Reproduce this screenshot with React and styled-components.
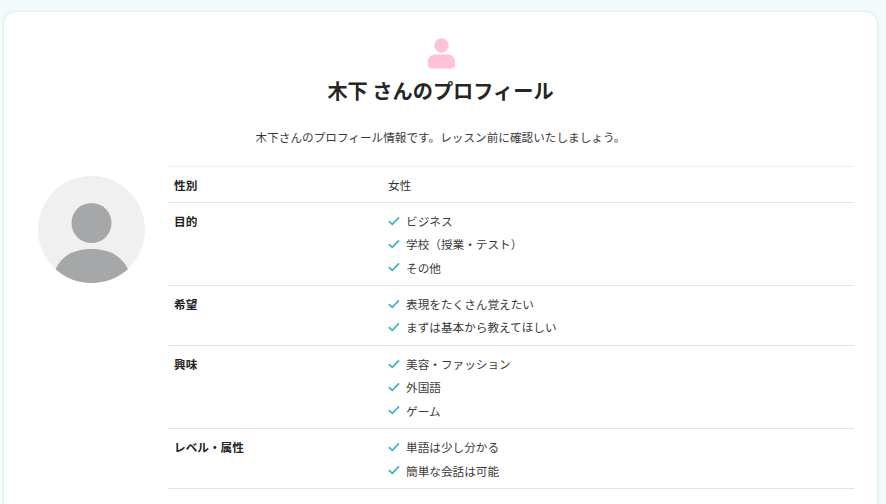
import React from 'react';
import styled, { createGlobalStyle } from 'styled-components';

const GlobalStyle = createGlobalStyle`
    html, body {
        margin: 0;
        height: 504px;
        overflow: hidden;
        background: #f3fafc;
        font-family: "Noto Sans CJK JP", "Noto Sans", sans-serif;
    }
`;

const rows = [
    { label: '性別', value: '女性' },
    { label: '目的', items: ['ビジネス', '学校（授業・テスト）', 'その他'] },
    { label: '希望', items: ['表現をたくさん覚えたい', 'まずは基本から教えてほしい'] },
    { label: '興味', items: ['美容・ファッション', '外国語', 'ゲーム'] },
    { label: 'レベル・属性', items: ['単語は少し分かる', '簡単な会話は可能'] },
];

const CheckIcon = () => (
    <svg width="12" height="10" viewBox="0 0 12 10" fill="none">
        <path d="M0.800 5.200 L4.300 8.400 L11 1.400" stroke="#3fb1c6" strokeWidth="1.700" />
    </svg>
);

const App = () => {
    return (
        <Page>
            <GlobalStyle />
            <Card>
                <Header>
                    <ProfileIcon width="27" height="31" viewBox="0 0 27 31">
                        <circle cx="13.500" cy="7.500" r="7.200" fill="#fec4d6" />
                        <path d="M7 16.500 H20 C24 16.500 27 19.500 27 23.500 V27 C27 29 25.500 30.500 23.500 30.500 H3.500 C1.500 30.500 0 29 0 27 V23.500 C0 19.500 3 16.500 7 16.500 Z" fill="#fec4d6" />
                    </ProfileIcon>
                    <Title>木下 さんのプロフィール</Title>
                    <Lead>木下さんのプロフィール情報です。レッスン前に確認いたしましょう。</Lead>
                </Header>
                <Body>
                    <Avatar>
                        <svg width="107" height="107" viewBox="0 0 107 107">
                            <circle cx="53.500" cy="53.500" r="53.500" fill="#f0f0f1" />
                            <circle cx="53.500" cy="47" r="20" fill="#a6a7a8" />
                            <path d="M17.500 93 C24 79 37 73 53.500 73 C70 73 83 79 90 93 C80 102 67 107 53.500 107 C40 107 27 102 17.500 93 Z" fill="#a6a7a8" />
                        </svg>
                    </Avatar>
                    <Table>
                        {rows.map((row) => (
                            <Row key={row.label}>
                                <Label>{row.label}</Label>
                                {row.items ? (
                                    <CheckList>
                                        {row.items.map((item) => (
                                            <CheckItem key={item}>
                                                <CheckIcon />
                                                {item}
                                            </CheckItem>
                                        ))}
                                    </CheckList>
                                ) : (
                                    <Value>{row.value}</Value>
                                )}
                            </Row>
                        ))}
                    </Table>
                </Body>
            </Card>
        </Page>
    );
};

const Page = styled.div`
    height: 504px;
    padding: 12px 9px 0 4px;
    box-sizing: border-box;
    overflow: hidden;
`;

const Card = styled.div`
    height: 520px;
    background: #fff;
    border-radius: 12px;
    box-shadow: 0 0 3px rgba(140, 165, 180, 0.35);
    padding-top: 26px;
    box-sizing: border-box;
`;

const Header = styled.div`
    display: flex;
    flex-direction: column;
    align-items: center;
    color: #2b2b2b;
`;

const ProfileIcon = styled.svg`
    margin-left: 2px;
`;

const Title = styled.h1`
    margin: 7px 0 0;
    font-size: 20.200px;
    line-height: 30px;
    font-weight: 700;
    color: #262626;
`;

const Lead = styled.p`
    margin: 21px 0 0;
    font-size: 11.640px;
    line-height: 20px;
    color: #3a3a3a;
`;

const Body = styled.div`
    display: flex;
    align-items: flex-start;
    margin-top: 19px;
    padding: 0 23px 0 34px;
`;

const Avatar = styled.div`
    flex: none;
    width: 107px;
    height: 107px;
    margin: 10px 23px 0 0;
`;

const Table = styled.div`
    flex: 1;
    border-top: 1px solid #eeeeee;
`;

const Row = styled.div`
    display: grid;
    grid-template-columns: 214px 1fr;
    padding: 7px 6px;
    border-bottom: 1px solid #e4e4e4;
    font-size: 11.640px;
    line-height: 21px;
`;

const Label = styled.div`
    font-weight: 700;
    color: #222;
`;

const Value = styled.div`
    color: #333;
`;

const CheckList = styled.ul`
    margin: 0;
    padding: 0 0 0.600px;
    list-style: none;
    display: flex;
    flex-direction: column;
    gap: 2.300px;
`;

const CheckItem = styled.li`
    display: flex;
    align-items: center;
    gap: 6px;
    color: #3a3a3a;
`;

export default App;
